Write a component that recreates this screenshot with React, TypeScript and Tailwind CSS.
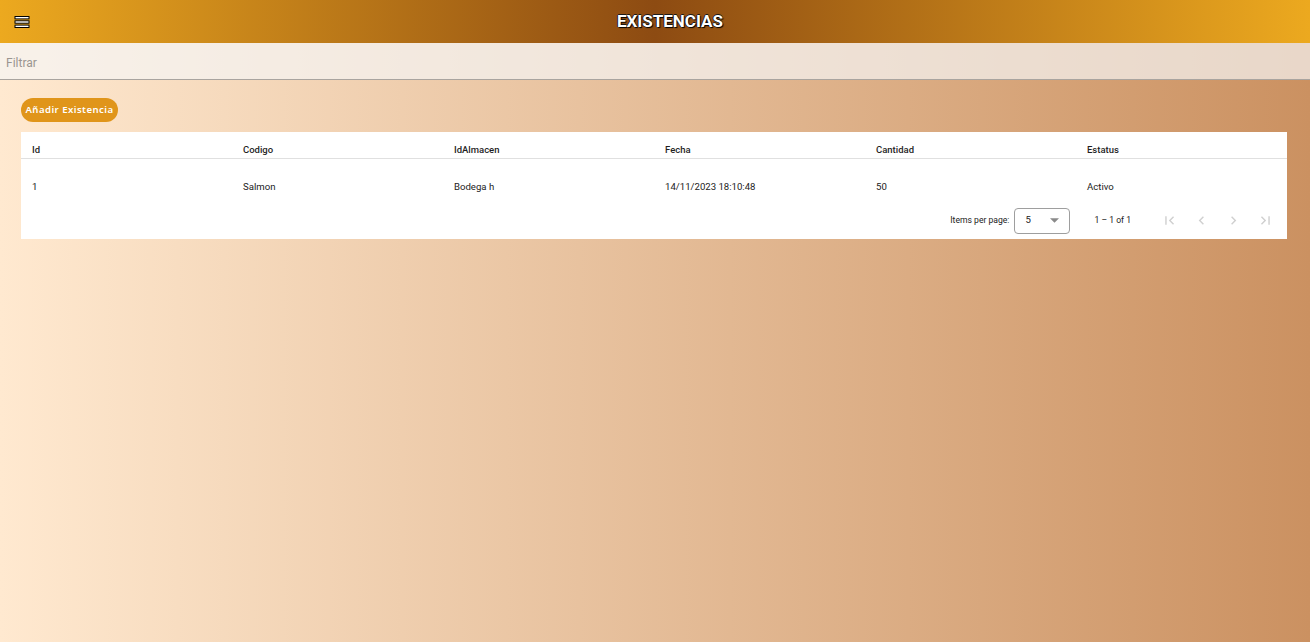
import { useState } from 'react';

const columns = ['Id', 'Codigo', 'IdAlmacen', 'Fecha', 'Cantidad', 'Estatus'];

const rows = [
  { id: '1', codigo: 'Salmon', almacen: 'Bodega h', fecha: '14/11/2023 18:10:48', cantidad: '50', estatus: 'Activo' },
];

function MenuIcon() {
  return (
    <svg width="16" height="12" viewBox="0 0 16 12">
      <rect x="1" y="0.5" width="14" height="2.4" fill="#fff" stroke="#000" strokeWidth="1" />
      <rect x="1" y="4.8" width="14" height="2.4" fill="#fff" stroke="#000" strokeWidth="1" />
      <rect x="1" y="9.1" width="14" height="2.4" fill="#fff" stroke="#000" strokeWidth="1" />
    </svg>
  );
}

const navIcons = [
  'M18.41 16.59L13.82 12l4.59-4.59L17 6l-6 6 6 6zM6 6h2v12H6z',
  'M15.41 7.41L14 6l-6 6 6 6 1.41-1.41L10.83 12z',
  'M10 6L8.59 7.41 13.17 12l-4.58 4.59L10 18l6-6z',
  'M5.59 7.41L10.18 12l-4.59 4.59L7 18l6-6-6-6zM16 6h2v12h-2z',
];

export default function App() {
  const [filter, setFilter] = useState('');

  return (
    <div className="min-h-[642px] bg-[linear-gradient(to_right,#ffe9d0,#cb9161)] font-['Roboto','Liberation_Sans',sans-serif]">
      <header className="flex h-[43px] items-center bg-[linear-gradient(to_right,#eca91f,#8d4b12_50%,#eca91f)]">
        <button className="flex w-[30px] items-center justify-end pt-[1px]">
          <MenuIcon />
        </button>
        <h1 className="flex-1 text-center text-[17px] font-bold text-white [text-shadow:1px_1px_1px_#000,-1px_0_0_#1a1a1a,0_-1px_0_#1a1a1a]">
          EXISTENCIAS
        </h1>
      </header>

      <div className="h-[37px] border-b border-[#a9a49f] bg-[#f5f5f5]/70">
        <input
          value={filter}
          onChange={(e) => setFilter(e.target.value)}
          placeholder="Filtrar"
          className="h-full w-full bg-transparent px-[6px] pt-[3px] text-[12px] text-[#333] outline-none placeholder:text-[#9a9590]"
        />
      </div>

      <div className="pl-[21px] pr-[23px] pt-[18px]">
        <button className="block h-[24px] w-[97px] rounded-full bg-[#e0951a] pt-[1px] font-['Noto_Sans',sans-serif] text-[9.6px] font-semibold tracking-[0.45px] text-white">
          Añadir Existencia
        </button>

        <div className="mt-[10px] bg-white">
          <div className="grid h-[27px] grid-cols-6 items-center border-b border-[#e0e0e0] pt-[11px]">
            {columns.map((c) => (
              <div key={c} className="pl-[11px] text-[9.5px] font-medium text-[#1f1f1f]">
                {c}
              </div>
            ))}
          </div>

          {rows.map((r) => (
            <div key={r.id} className="grid h-[43px] grid-cols-6 pt-[21px] text-[9.6px] text-[#222]">
              <div className="pl-[11px]">{r.id}</div>
              <div className="pl-[11px]">{r.codigo}</div>
              <div className="pl-[11px]">{r.almacen}</div>
              <div className="pl-[11px]">{r.fecha}</div>
              <div className="pl-[11px]">{r.cantidad}</div>
              <div className="pl-[11px]">{r.estatus}</div>
            </div>
          ))}

          <div className="flex h-[37px] items-center justify-end pr-[6px] text-[8.6px] text-[#222]">
            <span>Items per page:</span>
            <div className="ml-[5px] flex h-[26px] w-[56px] items-center justify-between rounded-[4px] border border-[#9e9e9e] pl-[10px] pr-[10px]">
              <span className="text-[9.6px]">5</span>
              <svg width="9" height="5" viewBox="0 0 10 5">
                <path d="M0 0l5 5 5-5z" fill="#8a8a8a" />
              </svg>
            </div>
            <span className="ml-[24px]">1 – 1 of 1</span>
            <div className="ml-[22px] flex">
              {navIcons.map((d, i) => (
                <div key={i} className="flex h-[32px] w-[32px] items-center justify-center">
                  <svg width="17" height="17" viewBox="0 0 24 24">
                    <path d={d} fill="#d0d0d0" />
                  </svg>
                </div>
              ))}
            </div>
          </div>
        </div>
      </div>
    </div>
  );
}
